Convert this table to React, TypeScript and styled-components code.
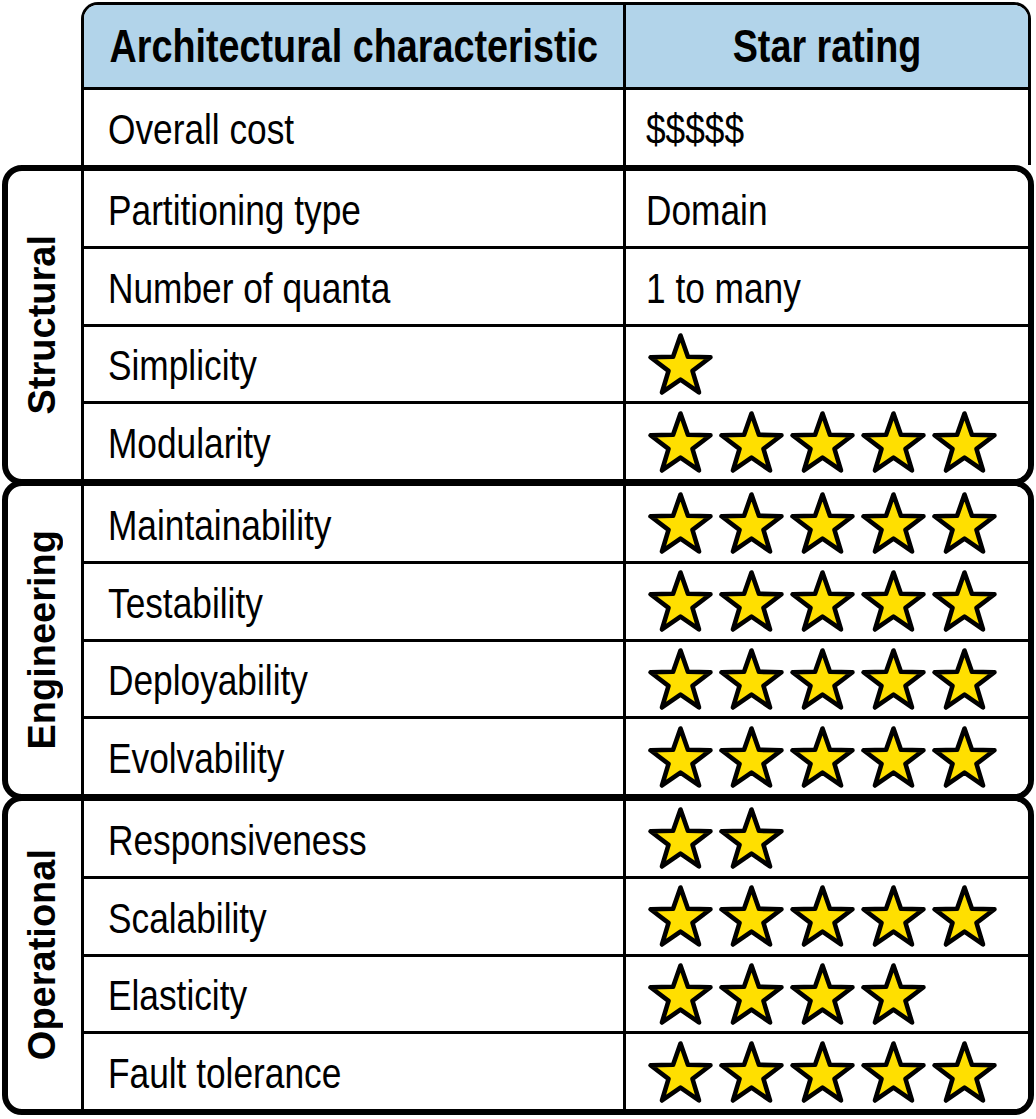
import React from "react";
import styled, { createGlobalStyle } from "styled-components";

const GlobalStyle = createGlobalStyle`
  html, body { margin: 0; padding: 0; background: #ffffff; }
  body {
    font-family: "Liberation Sans", Arial, sans-serif;
    color: #000;
  }
  *, *::before, *::after { box-sizing: border-box; }
`;

const Page = styled.div`
  width: 1036px;
  height: 1119px;
  padding: 2px 0 0 2px;
  display: flex;
  flex-direction: column;
`;

const TopTable = styled.div`
  margin-left: 79px;
  width: 950px;
  border: 3px solid #000;
  border-bottom: none;
  border-radius: 17px 17px 0 0;
  overflow: hidden;
  display: flex;
  flex-direction: column;
`;

const Row = styled.div<{ $divider?: boolean; $header?: boolean; $h?: number }>`
  display: grid;
  grid-template-columns: 542px 1fr;
  flex: ${(p) => (p.$h ? `0 0 ${p.$h}px` : "1 1 0")};
  min-height: 0;
  border-top: ${(p) => (p.$divider ? "3px solid #000" : "none")};
  border-bottom: ${(p) => (p.$header ? "3px solid #000" : "none")};
  background: ${(p) => (p.$header ? "#b2d4ea" : "#fff")};
`;

const Cell = styled.div<{ $header?: boolean; $left?: number; $rule?: boolean }>`
  display: flex;
  align-items: center;
  justify-content: ${(p) => (p.$header ? "center" : "flex-start")};
  padding-left: ${(p) => (p.$header ? 0 : p.$left ?? 0)}px;
  border-right: ${(p) => (p.$rule ? "3px solid #000" : "none")};
  white-space: nowrap;
  min-width: 0;
`;

const Text = styled.span<{ $header?: boolean }>`
  display: inline-block;
  font-size: ${(p) => (p.$header ? "46px" : "43px")};
  font-weight: ${(p) => (p.$header ? 700 : 400)};
  transform: scaleX(0.82);
  transform-origin: ${(p) => (p.$header ? "center center" : "left center")};
  margin-top: ${(p) => (p.$header ? "0" : "4px")};
`;

const StarCell = styled.div`
  display: flex;
  align-items: center;
  padding-left: 19px;
`;

const Group = styled.div<{ $first?: boolean }>`
  width: 1032px;
  height: 320px;
  margin-top: ${(p) => (p.$first ? "0" : "-5px")};
  border: 6px solid #000;
  border-radius: 20px;
  overflow: hidden;
  display: flex;
  background: #fff;
`;

const GroupLabel = styled.div`
  width: 76px;
  flex: 0 0 76px;
  border-right: 3px solid #000;
  display: flex;
  align-items: center;
  justify-content: center;
  padding-right: 6px;
`;

const LabelText = styled.span`
  writing-mode: vertical-rl;
  transform: rotate(180deg);
  font-size: 38px;
  font-weight: 700;
  white-space: nowrap;
  line-height: 1;
`;

const GroupRows = styled.div`
  flex: 1;
  display: flex;
  flex-direction: column;
`;

const StarSvg = styled.svg`
  width: 71px;
  height: 70px;
  flex: 0 0 71px;
  display: block;
`;

const starPoints = (() => {
  const cx = 35.5;
  const cy = 38;
  const R = 31.5;
  const r = R * 0.4;
  const pts: string[] = [];
  for (let i = 0; i < 10; i++) {
    const a = ((-90 + i * 36) * Math.PI) / 180;
    const rad = i % 2 === 0 ? R : r;
    pts.push(`${(cx + rad * Math.cos(a)).toFixed(2)},${(cy + rad * Math.sin(a)).toFixed(2)}`);
  }
  return pts.join(" ");
})();

const Star = () => (
  <StarSvg viewBox="0 0 71 70">
    <polygon
      points={starPoints}
      fill="#ffdf00"
      stroke="#000"
      strokeWidth={4.6}
      strokeLinejoin="round"
    />
  </StarSvg>
);

type Item = { name: string; value: string | number };
type GroupData = { label: string; items: Item[] };

const groups: GroupData[] = [
  {
    label: "Structural",
    items: [
      { name: "Partitioning type", value: "Domain" },
      { name: "Number of quanta", value: "1 to many" },
      { name: "Simplicity", value: 1 },
      { name: "Modularity", value: 5 },
    ],
  },
  {
    label: "Engineering",
    items: [
      { name: "Maintainability", value: 5 },
      { name: "Testability", value: 5 },
      { name: "Deployability", value: 5 },
      { name: "Evolvability", value: 5 },
    ],
  },
  {
    label: "Operational",
    items: [
      { name: "Responsiveness", value: 2 },
      { name: "Scalability", value: 5 },
      { name: "Elasticity", value: 4 },
      { name: "Fault tolerance", value: 5 },
    ],
  },
];

const Value = ({ value }: { value: string | number }) =>
  typeof value === "number" ? (
    <StarCell>
      {Array.from({ length: value }).map((_, i) => (
        <Star key={i} />
      ))}
    </StarCell>
  ) : (
    <Cell $left={20}>
      <Text>{value}</Text>
    </Cell>
  );

export default function App() {
  return (
    <>
      <GlobalStyle />
      <Page>
        <TopTable>
          <Row $header $h={85}>
            <Cell $header $rule>
              <Text $header>Architectural characteristic</Text>
            </Cell>
            <Cell $header>
              <Text $header>Star rating</Text>
            </Cell>
          </Row>
          <Row $h={75}>
            <Cell $left={24} $rule>
              <Text>Overall cost</Text>
            </Cell>
            <Value value="$$$$$" />
          </Row>
        </TopTable>
        {groups.map((g, gi) => (
          <Group key={g.label} $first={gi === 0}>
            <GroupLabel>
              <LabelText>{g.label}</LabelText>
            </GroupLabel>
            <GroupRows>
              {g.items.map((it, i) => (
                <Row key={it.name} $divider={i > 0}>
                  <Cell $left={24} $rule>
                    <Text>{it.name}</Text>
                  </Cell>
                  <Value value={it.value} />
                </Row>
              ))}
            </GroupRows>
          </Group>
        ))}
      </Page>
    </>
  );
}
